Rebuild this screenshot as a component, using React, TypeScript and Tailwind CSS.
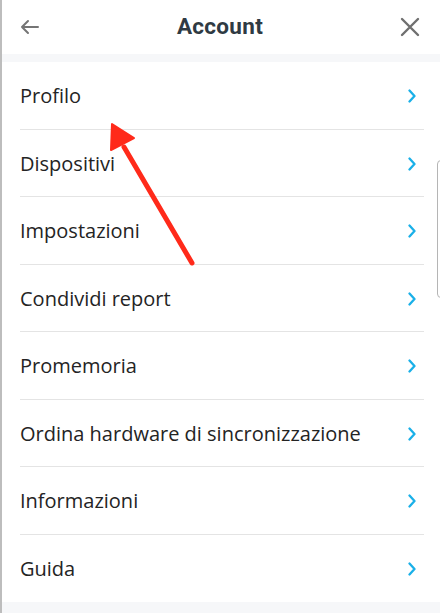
const items = [
  "Profilo",
  "Dispositivi",
  "Impostazioni",
  "Condividi report",
  "Promemoria",
  "Ordina hardware di sincronizzazione",
  "Informazioni",
  "Guida",
];

export default function App() {
  return (
    <div className="relative w-[440px] h-[613px] overflow-hidden bg-[#f6f7f9] border-l-2 border-[#bdbdbd] font-['Open_Sans',sans-serif]">
      {/* Header */}
      <div className="h-[54px] bg-white flex items-center justify-between pl-[18px] pr-[20px]">
        <svg width="20" height="16" viewBox="0 0 20 16" fill="none" stroke="#757575" strokeWidth="2" strokeLinecap="round" strokeLinejoin="round">
          <path d="M18 8H2M8 2L2 8l6 6" />
        </svg>
        <h1 className="font-['Roboto',sans-serif] font-bold text-[22.5px] text-[#2f3a43] tracking-[0.3px]">
          Account
        </h1>
        <svg width="20" height="20" viewBox="0 0 20 20" fill="none" stroke="#6f6f6f" strokeWidth="2.4" strokeLinecap="round">
          <path d="M2 2l16 16M18 2L2 18" />
        </svg>
      </div>

      <div className="h-[8px]" />

      {/* List */}
      <div className="bg-white">
        {items.map((label, i) => (
          <div key={label} className="h-[67.5px] pl-[18px] pr-[16px]">
            <div
              className={`h-full flex items-center justify-between ${
                i < items.length - 1 ? "border-b border-[#e4e4e4]" : ""
              }`}
            >
              <span className="text-[20px] text-[#242424] pt-[2px]">{label}</span>
              <svg width="8" height="14" viewBox="0 0 8 14" fill="none" stroke="#1ab0e8" strokeWidth="2.3" strokeLinecap="round" strokeLinejoin="round" className="mr-[8px] mt-[2px]">
                <path d="M1.5 1.5L6.5 7l-5 5.5" />
              </svg>
            </div>
          </div>
        ))}
      </div>

      {/* scroll handle peeking at right */}
      <div className="absolute left-[435px] top-[160px] w-[12px] h-[138px] rounded-[4px] border border-[#b5b5b5] bg-white" />

      {/* annotation arrow */}
      <svg className="absolute left-0 top-0 pointer-events-none" width="440" height="613">
        <line x1="190" y1="263" x2="122" y2="147" stroke="#ff2a1a" strokeWidth="5" strokeLinecap="round" />
        <polygon points="110,124 109,150 132,138" fill="#ff2a1a" stroke="#ff2a1a" strokeWidth="2" strokeLinejoin="round" />
      </svg>
    </div>
  );
}
